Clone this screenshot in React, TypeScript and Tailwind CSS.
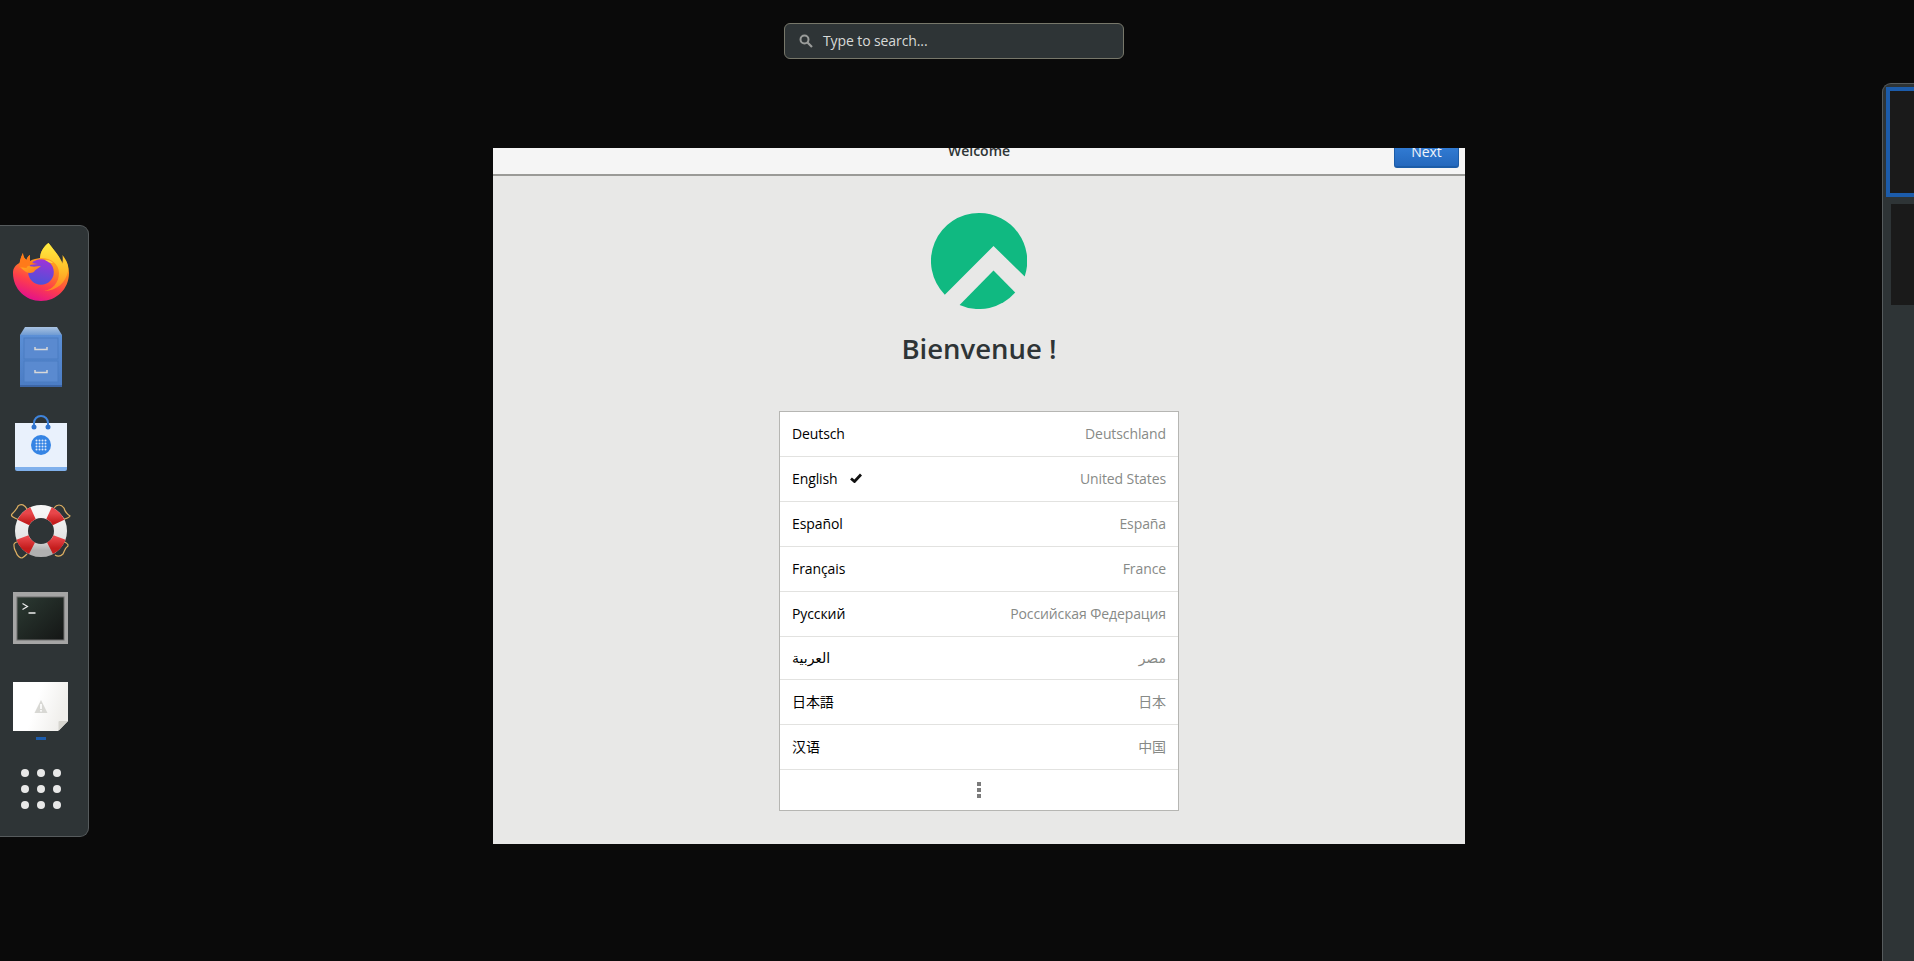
import React from "react";

const UI = { fontFamily: '"Open Sans","Noto Sans",sans-serif' };

function Firefox() {
  return (
    <svg width="56" height="58" viewBox="0 0 56 58">
      <defs>
        <linearGradient id="ff1" x1="0.75" y1="0.05" x2="0.4" y2="1">
          <stop offset="0" stopColor="#ffd226" />
          <stop offset="0.4" stopColor="#ff8a1f" />
          <stop offset="0.7" stopColor="#ff3f4a" />
          <stop offset="1" stopColor="#e3128a" />
        </linearGradient>
        <linearGradient id="ff2" x1="0.5" y1="0" x2="0.5" y2="1">
          <stop offset="0" stopColor="#fff044" />
          <stop offset="0.55" stopColor="#ffc22a" />
          <stop offset="1" stopColor="#ff8a1f" />
        </linearGradient>
        <linearGradient id="ff3" x1="0.6" y1="0" x2="0.4" y2="1">
          <stop offset="0" stopColor="#9f33d8" />
          <stop offset="1" stopColor="#4b52d8" />
        </linearGradient>
        <linearGradient id="ff4" x1="0" y1="0" x2="1" y2="0.6">
          <stop offset="0" stopColor="#ffb01f" />
          <stop offset="1" stopColor="#ff7a1f" />
        </linearGradient>
      </defs>
      <path d="M10 10C8 14 7 18 6.500 20 2.500 22 0 25 0 30c0 16 12.500 28 28 28s28-12 28-28c0-7-2.500-13-6.500-18 .500 4 .200 7-.5 9C46 12 40 6 35.500 0c-4 3-8 8-8.500 15-3 .500-7 1-10 3-.5-2 0-4 0-6-2 1-3 3-3.500 5-2-1.500-3.500-4-3.500-7z" fill="url(#ff1)" />
      <path d="M35.500 0c-4 3-8 8-8.500 15 9-1 19 5 19 15 0 10-7 17-15 18 13 0 22-9 24-20 .800-5-1-10-5-14 .500 3 .500 5 0 7C46 12 40 6 35.500 0z" fill="url(#ff2)" opacity="0.92" />
      <circle cx="28" cy="29" r="12.800" fill="url(#ff3)" />
      <path d="M7 24c4-2 9-1 12-.5 3 .500 6-.5 9-.5-2 2-5 3-6 4.500-2 3-6 3-9 1.500-2-1.500-4-3-6-5z" fill="url(#ff4)" />
      <path d="M10 10c0 4 1.500 6 3.500 7 .5-2 1.500-4 3.500-5 0 2-.5 4 0 6 2 2 5 3 8 3-3 .500-6 .500-8 1-2 .500-3 1.500-3.500 3-3-.5-5-.5-7-.5 0-6 1-10 3.500-14.500z" fill="#ff7a1a" />
      <path d="M32 17c3-.5 6 .5 8 3-2 0-3-.5-4-.5-1-1-2.500-1.800-4-2.500z" fill="#ffd24a" />
    </svg>
  );
}

function Cabinet() {
  return (
    <svg width="42" height="60" viewBox="0 0 42 60">
      <defs>
        <linearGradient id="cb1" x1="0" y1="0" x2="0" y2="1">
          <stop offset="0" stopColor="#a9c3e2" />
          <stop offset="1" stopColor="#6f9bd3" />
        </linearGradient>
        <linearGradient id="cb2" x1="0" y1="0" x2="0" y2="1">
          <stop offset="0" stopColor="#5b8fd6" />
          <stop offset="1" stopColor="#4b7cc4" />
        </linearGradient>
      </defs>
      <path d="M5 0h32l5 8H0z" fill="url(#cb1)" />
      <rect x="0" y="8" width="42" height="52" fill="url(#cb2)" />
      <rect x="0" y="58" width="42" height="2" fill="#3d66a6" />
      <rect x="4" y="11" width="34" height="21" fill="#5a8ad0" stroke="#4a7cc2" />
      <rect x="4" y="34" width="34" height="21" fill="#5a8ad0" stroke="#4a7cc2" />
      <path d="M15 20v2.500h12V20" fill="none" stroke="#d8d8d8" strokeWidth="1.500" />
      <path d="M15 43v2.500h12V43" fill="none" stroke="#d8d8d8" strokeWidth="1.500" />
    </svg>
  );
}

function Bag() {
  const dots: React.ReactNode[] = [];
  for (let r = 0; r < 4; r++)
    for (let c = 0; c < 4; c++)
      dots.push(<circle key={`${r}-${c}`} cx={21.500 + c * 3} cy={25.500 + r * 3} r="1" fill="#dfeafa" />);
  return (
    <svg width="52" height="56" viewBox="0 0 52 56">
      <rect x="0" y="8" width="52" height="48" rx="2" fill="#7fb0ec" />
      <rect x="0" y="8" width="52" height="44" fill="#e9f1fc" />
      <path d="M19 12V8c0-4 3-7 7-7s7 3 7 7v4" fill="none" stroke="#3f84dc" strokeWidth="2" />
      <circle cx="19" cy="12" r="2.500" fill="#2f72cc" />
      <circle cx="33" cy="12" r="2.500" fill="#2f72cc" />
      <circle cx="26" cy="30" r="10" fill="#3584e4" />
      {dots}
    </svg>
  );
}

function Ring() {
  return (
    <svg width="60" height="56" viewBox="0 0 60 56" className="overflow-visible">
      <defs>
        <linearGradient id="rg1" x1="0" y1="0" x2="0" y2="1">
          <stop offset="0" stopColor="#f6f6f6" />
          <stop offset="0.7" stopColor="#e4e4e4" />
          <stop offset="1" stopColor="#b0b0b0" />
        </linearGradient>
        <linearGradient id="rg2" x1="0" y1="0" x2="0" y2="1">
          <stop offset="0" stopColor="#e8464a" />
          <stop offset="1" stopColor="#c41d1d" />
        </linearGradient>
      </defs>
      <g fill="none" stroke="#dcae62" strokeWidth="1.200">
        <path d="M16 6C14 2 10 0 7 3 6 6 4 8 1 11-1 13 3 15 9 17" />
        <path d="M43 5C46 1 50 1 53 5 54 9 56 11 59 13 57 16 53 16 49 17" />
        <path d="M9 38C5 39 2 40 3 43 3 46 4 47 5 49 6 53 9 55 11 55 13 54 14 53 16 51" />
        <path d="M51 38C54 39 58 41 57 43 54 45 54 47 52 51 50 53 47 54 44 52" />
      </g>
      <circle cx="30" cy="28" r="19.500" fill="none" stroke="url(#rg1)" strokeWidth="13" />
      <g fill="none" stroke="url(#rg2)" strokeWidth="13">
        <path d="M22 10.200A19.500 19.500 0 0 0 12.500 19.500" />
        <path d="M38 10.200A19.500 19.500 0 0 1 47.500 19.500" />
        <path d="M11.500 34.500A19.500 19.500 0 0 0 21 45.300" />
        <path d="M48.500 34.500A19.500 19.500 0 0 1 39 45.300" />
      </g>
    </svg>
  );
}

function Terminal() {
  return (
    <svg width="55" height="52" viewBox="0 0 55 52">
      <defs>
        <linearGradient id="tm1" x1="0" y1="0" x2="1" y2="1">
          <stop offset="0" stopColor="#2c3a33" />
          <stop offset="1" stopColor="#141615" />
        </linearGradient>
      </defs>
      <rect width="55" height="52" fill="#a5a5a5" />
      <rect x="4" y="5" width="47" height="43" fill="url(#tm1)" stroke="#6e6e6e" />
      <path d="M9.500 11.500l5 3-5 3" fill="none" stroke="#eee" strokeWidth="1.200" />
      <path d="M15.500 21h7" stroke="#eee" strokeWidth="1.500" />
    </svg>
  );
}

function Doc() {
  return (
    <svg width="55" height="49" viewBox="0 0 55 49">
      <defs>
        <linearGradient id="dc1" x1="0" y1="0" x2="1" y2="0.3">
          <stop offset="0.5" stopColor="#ffffff" />
          <stop offset="1" stopColor="#f0efec" />
        </linearGradient>
      </defs>
      <path d="M0 0h55v39L45 49H0z" fill="url(#dc1)" />
      <path d="M55 39H46.500a1 1 0 0 0-1 1V49z" fill="#d6d5cf" />
      <path d="M28 18l6.500 13h-13z" fill="#d8d8d4" />
      <rect x="27.200" y="22" width="1.600" height="5" fill="#fff" />
      <rect x="27.200" y="28" width="1.600" height="1.600" fill="#fff" />
    </svg>
  );
}

function Logo() {
  return (
    <svg width="96" height="96" viewBox="0 0 96 96">
      <path
        d="M48 0A48 48 0 0 1 93.700 63.500L62.500 33 13.800 81.700A48 48 0 0 1 48 0z"
        fill="#10b981"
      />
      <path d="M62.500 57.500L84.200 79.600A48 48 0 0 1 28.600 91.900z" fill="#10b981" />
    </svg>
  );
}

const rows: [string, string, number][] = [
  ["Deutsch", "Deutschland", 45],
  ["English", "United States", 45],
  ["Español", "España", 45],
  ["Français", "France", 45],
  ["Русский", "Российская Федерация", 45],
  ["العربية", "مصر", 43],
  ["日本語", "日本", 45],
  ["汉语", "中国", 45],
];

const ROW_FONT = {
  fontFamily: '"Open Sans","Noto Sans CJK JP","DejaVu Sans",sans-serif',
};

function Row({ a, b, h }: { a: string; b: string; h: number }) {
  return (
    <div
      className={`flex items-center justify-between px-3 pb-[2px] text-[14px] tracking-[-0.1px] border-b border-[#e2e2e0] ${h === 43 ? "h-[43px]" : "h-[45px]"}`}
      style={ROW_FONT}
    >
      <div className="flex items-center gap-3 text-black">
        <span>{a}</span>
        {a === "English" && (
          <svg width="12" height="10" viewBox="0 0 12 10">
            <path d="M1 5.500L4.500 8.500 11 1.500" fill="none" stroke="#111" strokeWidth="2.800" />
          </svg>
        )}
      </div>
      <span className="text-[#878a87]">{b}</span>
    </div>
  );
}

export default function App() {
  return (
    <div className="flex w-[1914px] h-[961px] overflow-hidden bg-[#0a0a0a]" style={UI}>
      {/* dock */}
      <div className="w-[89px] h-[612px] mt-[225px] shrink-0 flex flex-col items-center pt-[2px] pr-[7px] bg-[#2e3436] border border-l-0 border-[#565b5d] rounded-r-[9px]">
        <div className="h-[87px] flex items-center justify-center"><Firefox /></div>
        <div className="h-[84px] flex items-center justify-center"><Cabinet /></div>
        <div className="h-[88px] flex items-center justify-center"><Bag /></div>
        <div className="h-[87px] flex items-center justify-center"><Ring /></div>
        <div className="h-[88px] flex items-center justify-center"><Terminal /></div>
        <div className="h-[87px] flex flex-col items-center pt-[20px]">
          <Doc />
          <div className="w-[10px] h-[3px] mt-[6px] bg-[#1c5cab]" />
        </div>
        <div className="grid grid-cols-3 gap-x-[8px] gap-y-[8px] mt-[20px]">
          {Array.from({ length: 9 }).map((_, i) => (
            <div key={i} className="w-[8px] h-[8px] rounded-full bg-[#e8e8e8]" />
          ))}
        </div>
      </div>

      {/* centre */}
      <div className="flex-1 flex flex-col items-start">
        <div className="ml-[695px] mt-[23px] w-[340px] h-[36px] flex items-center gap-[10px] pl-[14px] rounded-[6px] bg-[#2e3436] border border-[#77776a] text-[14px] tracking-[-0.1px] text-[#d8dad8]">
          <svg width="14" height="14" viewBox="0 0 14 14">
            <circle cx="5.500" cy="5.500" r="4" fill="none" stroke="#9a9c9a" strokeWidth="2" />
            <path d="M8.500 8.500L13 13" stroke="#9a9c9a" strokeWidth="2.200" />
          </svg>
          <span className="-mt-[2px]">Type to search...</span>
        </div>

        <div className="ml-[404px] mt-[89px] w-[972px] h-[696px] flex flex-col bg-[#e8e8e7]">
          <div className="h-[28px] shrink-0 overflow-hidden bg-[#f5f5f5] border-b-2 border-[#9a9a97]">
            <div className="-mt-[13px] grid grid-cols-[1fr_auto_1fr]">
              <div />
              <div className="h-[32px] leading-[32px] text-[14px] font-semibold text-[#2e3436]">Welcome</div>
              <div className="justify-self-end mr-[6px] w-[65px] h-[33px] flex items-center justify-center rounded-[3px] bg-gradient-to-b from-[#3a87e0] to-[#2468bd] border border-[#1b5ca8] border-b-2 text-[14px] text-[#f2f5fa]">
                Next
              </div>
            </div>
          </div>

          <div className="flex-1 flex flex-col items-center pt-[37px]">
            <Logo />
            <div className="mt-[20px] text-[27.5px] leading-[40px] font-semibold text-[#2e3436]">Bienvenue !</div>
            <div className="mt-[42px] w-[400px] bg-white border border-[#b6b6b3]">
              {rows.map(([a, b, h]) => (
                <Row key={a} a={a} b={b} h={h} />
              ))}
              <div className="h-[40px] flex flex-col items-center justify-center gap-[2px]">
                <div className="w-[4px] h-[4px] bg-[#7b7b7b]" />
                <div className="w-[4px] h-[4px] bg-[#7b7b7b]" />
                <div className="w-[4px] h-[4px] bg-[#7b7b7b]" />
              </div>
            </div>
          </div>
        </div>
      </div>

      {/* workspace strip */}
      <div className="w-[32px] h-[878px] mt-[83px] shrink-0 flex flex-col items-end pt-[3px] bg-[#2e3436] border-l border-t border-[#565b5d] rounded-tl-[9px]">
        <div className="w-[28px] h-[110px] bg-[#1a1a1a] border-y-4 border-l-4 border-[#1c5cab]" />
        <div className="w-[23px] h-[101px] mt-[7px] bg-[#1a1a1a]" />
      </div>
    </div>
  );
}
